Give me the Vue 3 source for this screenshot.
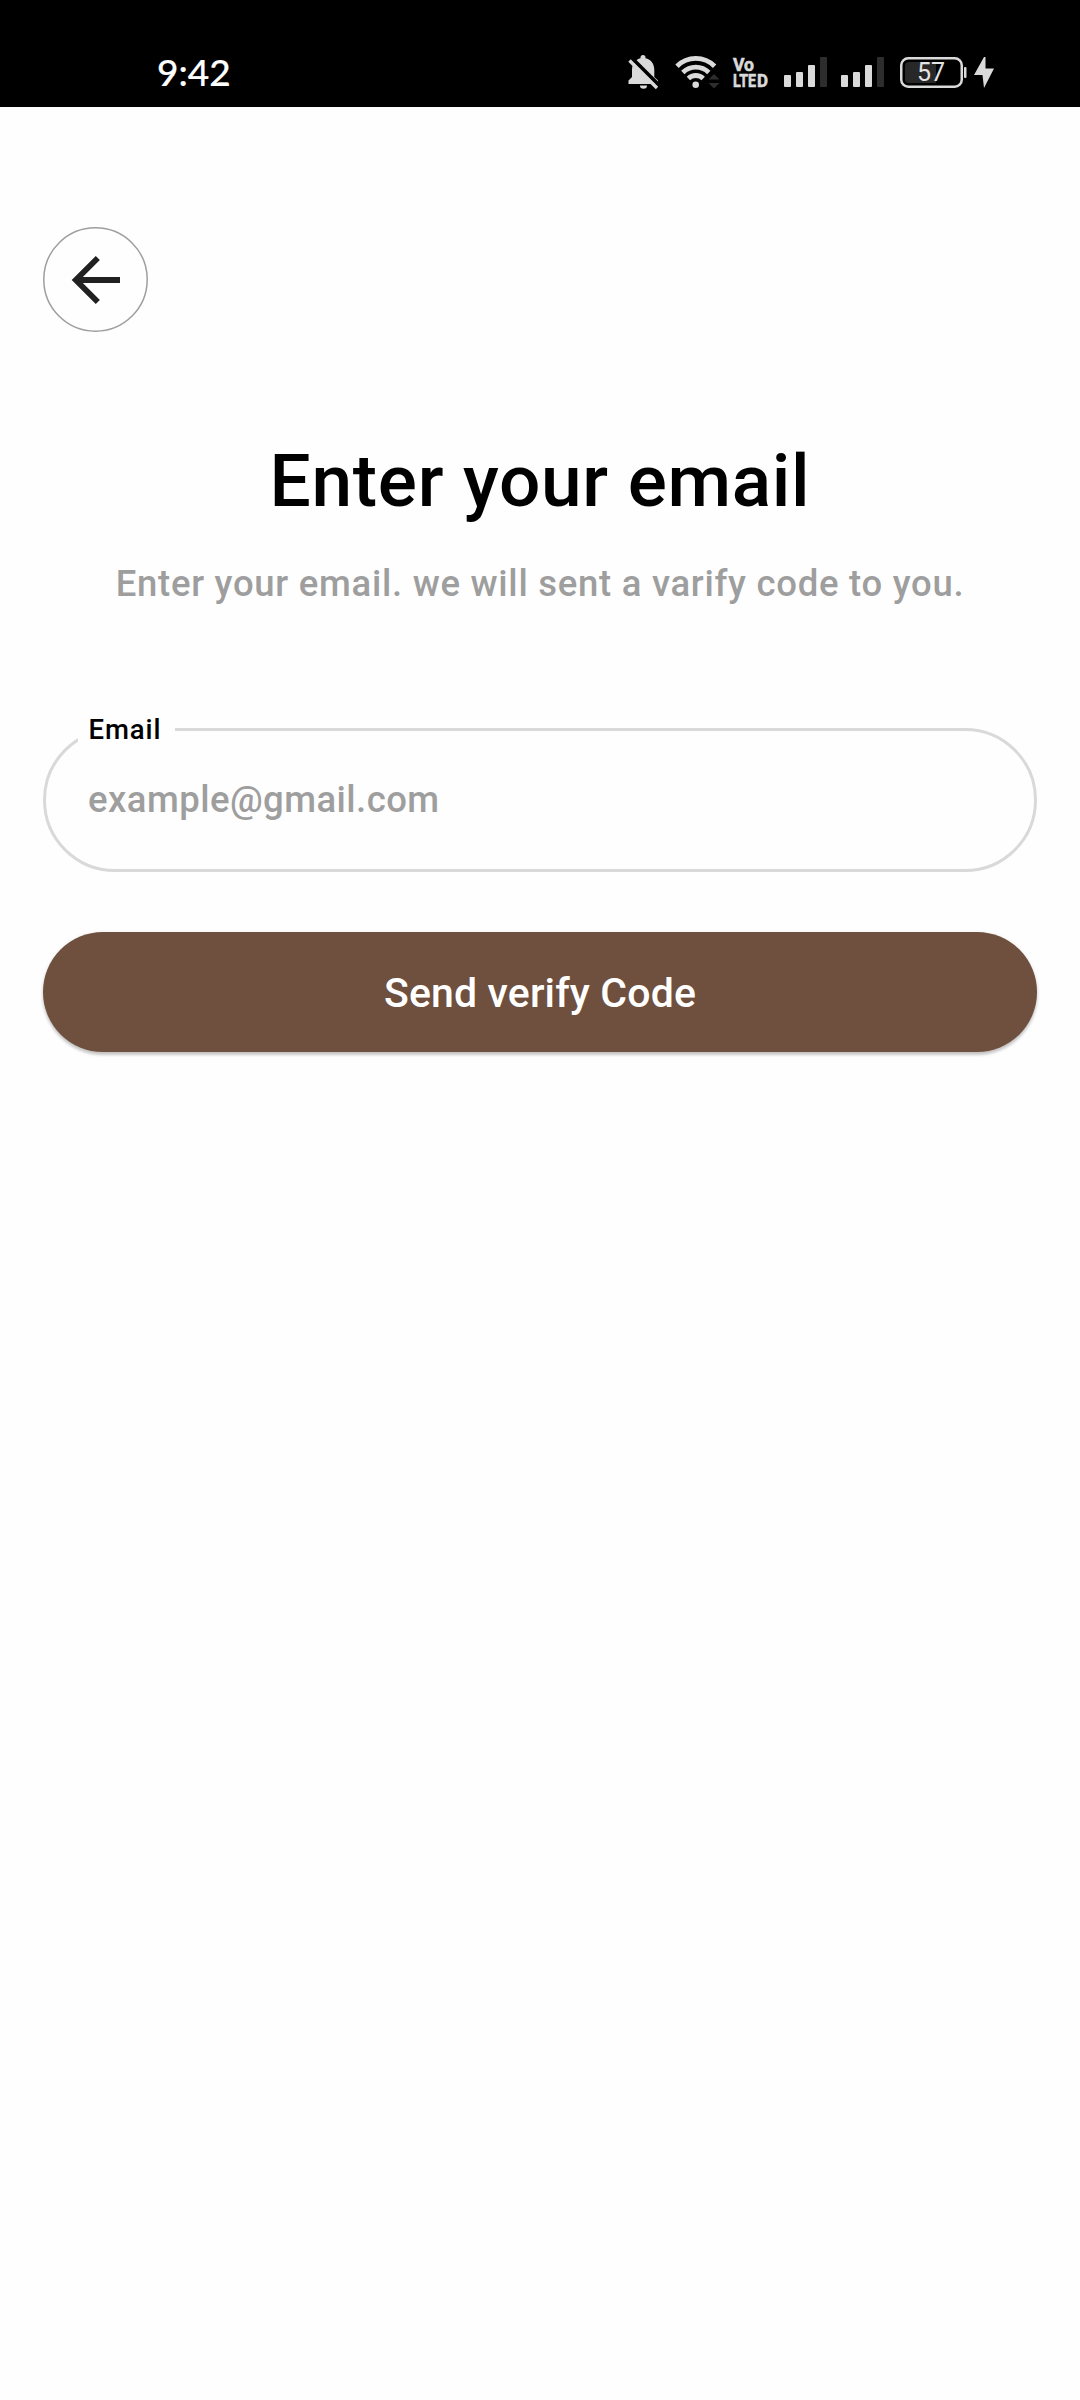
<script setup>
import { ref } from 'vue'

const email = ref('')
const simBars = [
  { x: 0, y: 18, fill: '#dadada' },
  { x: 12, y: 15, fill: '#dadada' },
  { x: 24, y: 8, fill: '#dadada' },
  { x: 36, y: 0, fill: '#2d2d2d' },
]
</script>

<template>
  <div class="screen">
    <header class="status">
      <span class="time">9:42</span>
      <div class="icons">
        <svg class="bell" width="32" height="36" viewBox="0 0 32 36">
          <path fill="#dadada" d="M4 22V15C4 8.500 7.500 4.500 12.500 3.200V2.500a2.500 2.500 0 0 1 5 0V3.200C23 4.500 26.300 8.500 26.300 15V22L30 25.500V29H0.500V25.500z" />
          <path fill="#dadada" d="M12 30.500h7a3.500 3.200 0 0 1-7 0z" />
          <path stroke="#000" stroke-width="4" d="M2.500 1.800L34 33.300" />
          <path stroke="#dadada" stroke-width="3.400" d="M1.500 5.500L29 33" />
        </svg>
        <svg class="wifi" width="46" height="36" viewBox="0 0 46 36">
          <g fill="none" stroke="#dadada" stroke-width="4.800">
            <path d="M2 12.200a26.500 26.500 0 0 1 37.600 0" />
            <path d="M7.800 18.500a18.500 18.500 0 0 1 26 0" />
            <path d="M13.400 24.500a10.600 10.600 0 0 1 14.800 0" />
          </g>
          <circle cx="20.700" cy="30.700" r="3.300" fill="#dadada" />
          <path fill="#2d2d2d" d="M33.500 25.500l5.500-5.500l5.500 5.500zM33.500 29l5.500 5.500l5.500-5.500z" />
        </svg>
        <svg class="volte" width="36" height="32" viewBox="0 0 36 32">
          <text fill="#dadada" stroke="#dadada" stroke-width="0.600" font-family="Roboto, sans-serif" font-weight="700" font-size="19">
            <tspan x="0" y="13.800" textLength="21" lengthAdjust="spacingAndGlyphs">Vo</tspan>
            <tspan x="0" y="29.600" textLength="23" lengthAdjust="spacingAndGlyphs">LTE</tspan>
            <tspan x="24" y="29.600" textLength="11" lengthAdjust="spacingAndGlyphs">D</tspan>
          </text>
        </svg>
        <svg v-for="sim in 2" :key="sim" class="signal" width="43" height="30" viewBox="0 0 43 30">
          <rect
            v-for="bar in simBars"
            :key="bar.x"
            :x="bar.x"
            :y="bar.y"
            width="7"
            :height="30 - bar.y"
            rx="1"
            :fill="bar.fill"
          />
        </svg>
        <svg class="battery" width="67" height="32" viewBox="0 0 67 32">
          <rect x="1.250" y="1.250" width="60.500" height="28.500" rx="7" fill="none" stroke="#dadada" stroke-width="2.500" />
          <path fill="#282828" d="M9 5h27v21H9a4 4 0 0 1-4-4V9a4 4 0 0 1 4-4z" />
          <rect x="64" y="10" width="2.500" height="11" rx="1" fill="#dadada" />
          <text x="31" y="24.300" fill="#e4e4e4" font-family="Roboto, sans-serif" font-size="25" text-anchor="middle">57</text>
        </svg>
        <svg class="bolt" width="20" height="31" viewBox="0 0 20 31">
          <path fill="#dadada" d="M10 0L0 18h8.500L10 31L20 11.500h-8.500V0z" />
        </svg>
      </div>
    </header>

    <main class="content">
      <button class="back" aria-label="Back">
        <svg width="105" height="105" viewBox="0 0 105 105" fill="none">
          <circle cx="52.500" cy="52.500" r="51.700" stroke="#9e9e9e" stroke-width="1.500" />
          <path d="M77 53H33.500M54.800 31L32.800 53L54.800 75" stroke="#212121" stroke-width="5.800" />
        </svg>
      </button>
      <h1 class="title">Enter your email</h1>
      <p class="subtitle">Enter your email. we will sent a varify code to you.</p>
      <div class="field">
        <label class="label" for="email">Email</label>
        <input id="email" v-model="email" class="input" type="email" placeholder="example@gmail.com" />
      </div>
      <button class="submit">Send verify Code</button>
    </main>
  </div>
</template>

<style>
body {
  background: #fefefe;
}
</style>

<style scoped>
.screen {
  width: 1080px;
  height: 2400px;
  overflow: hidden;
  background: #fefefe;
  font-family: Roboto, sans-serif;
}

.status {
  display: flex;
  align-items: flex-start;
  justify-content: space-between;
  box-sizing: border-box;
  height: 107px;
  padding: 0 86px 0 157px;
  background: #000;
}

.time {
  margin-top: 50px;
  color: #fff;
  font: 500 37px/44px Lato, sans-serif;
  -webkit-text-stroke: 0.200px #fff;
}

.icons {
  display: flex;
  align-items: flex-start;
  padding-top: 57px;
}

.icons svg {
  flex: none;
  display: block;
  overflow: visible;
}

.icons .bell {
  margin: -2px 15px 0 0;
  overflow: hidden;
}

.wifi {
  margin: -3px 12px 0 0;
}

.volte {
  margin-right: 15px;
}

.signal {
  margin-right: 14px;
}

.signal + .battery {
  margin-left: 2px;
}

.bolt {
  margin-left: 7px;
}

.content {
  display: flex;
  flex-direction: column;
  padding: 120px 43px 0;
}

.back {
  width: 105px;
  height: 105px;
  padding: 0;
  border: 0;
  border-radius: 50%;
  background: transparent;
}

.back svg {
  display: block;
}

.title {
  margin: 106px 0 0;
  color: #000;
  font-size: 73px;
  font-weight: 500;
  line-height: 86px;
  letter-spacing: 0.700px;
  text-align: center;
}

.subtitle {
  margin: 38px 0 0;
  color: #9e9e9e;
  font-size: 36.500px;
  font-weight: 500;
  line-height: 44px;
  letter-spacing: 0.720px;
  text-align: center;
}

.field {
  position: relative;
  box-sizing: border-box;
  height: 144px;
  margin-top: 122px;
  border: 3px solid #d9d9d9;
  border-radius: 72px;
}

.label {
  position: absolute;
  top: -17px;
  left: 32px;
  width: 97px;
  box-sizing: border-box;
  padding-left: 10.500px;
  background: #fefefe;
  color: #000;
  font-size: 27.500px;
  font-weight: 500;
  line-height: 32px;
  letter-spacing: 0.900px;
}

.input {
  display: block;
  width: 100%;
  height: 136px;
  box-sizing: border-box;
  padding: 0 42px;
  border: 0;
  outline: 0;
  background: transparent;
  color: #000;
  font: 500 36.500px/44px Roboto, sans-serif;
  letter-spacing: 0.450px;
}

.input::placeholder {
  color: #9e9e9e;
  opacity: 1;
}

.submit {
  height: 120px;
  margin-top: 60px;
  padding: 2px 0 0;
  border: 0;
  border-radius: 60px;
  background: #6f4f3e;
  box-shadow: 0 3px 3px rgba(0, 0, 0, 0.18), 0 1px 4px rgba(0, 0, 0, 0.1);
  color: #fff;
  font: 500 41px/48px Roboto, sans-serif;
  letter-spacing: 0.150px;
}
</style>
